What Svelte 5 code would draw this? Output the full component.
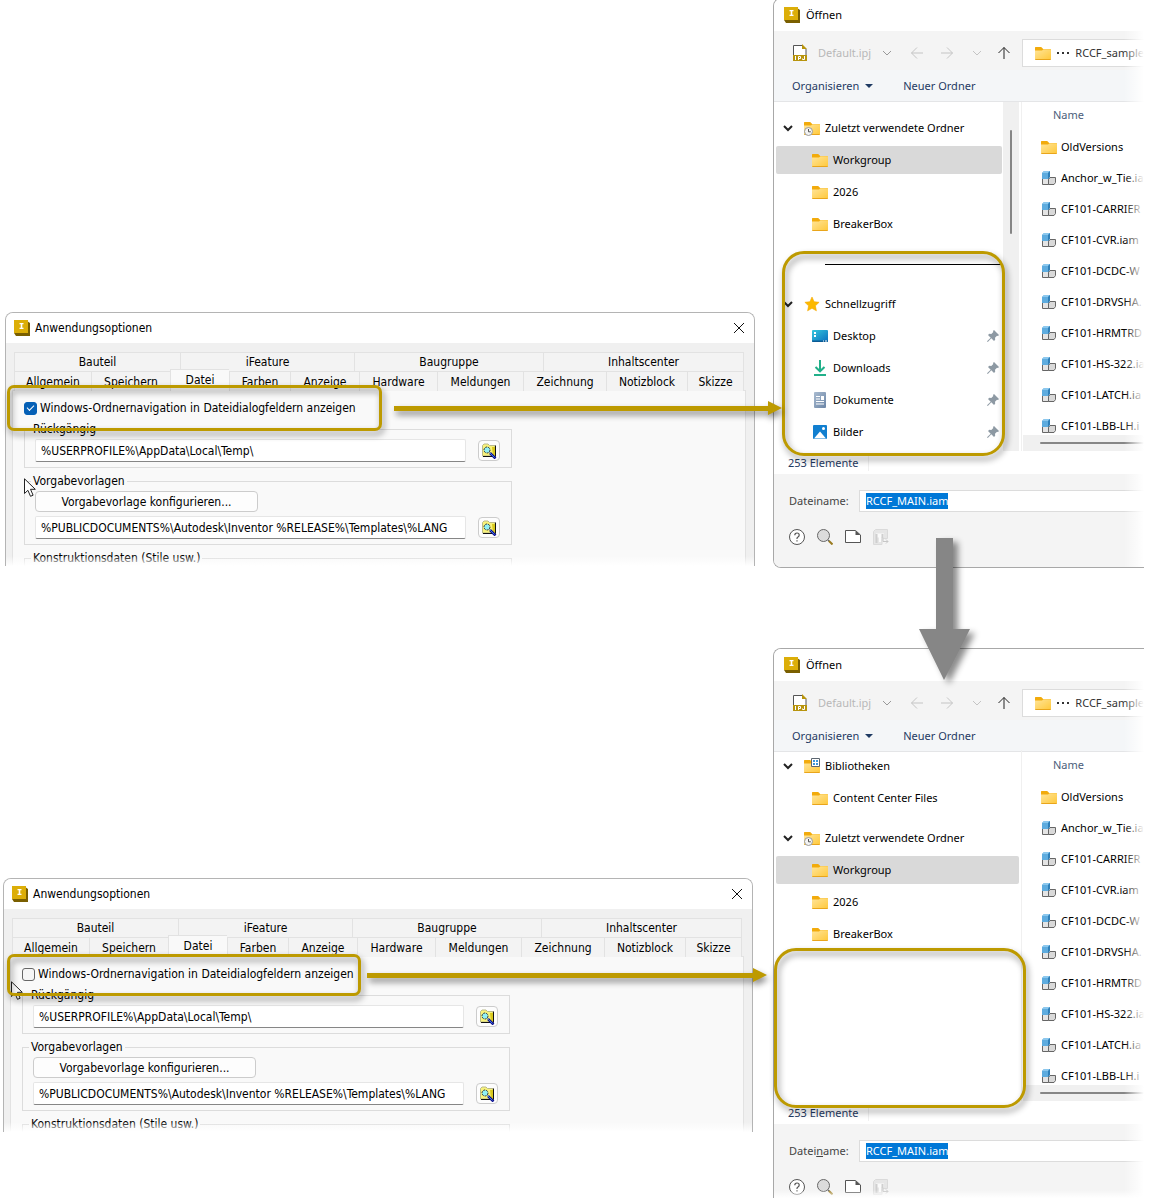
<script>
	const tabRows = [
		['Bauteil', 'iFeature', 'Baugruppe', 'Inhaltscenter'],
		['Allgemein', 'Speichern', 'Datei', 'Farben', 'Anzeige', 'Hardware', 'Meldungen', 'Zeichnung', 'Notizblock', 'Skizze'],
	];

	const files = [
		'OldVersions',
		'Anchor_w_Tie.ia',
		'CF101-CARRIER',
		'CF101-CVR.iam',
		'CF101-DCDC-W',
		'CF101-DRVSHA.',
		'CF101-HRMTRD',
		'CF101-HS-322.ia',
		'CF101-LATCH.ia',
		'CF101-LBB-LH.i',
	];

	const recent = [
		{ label: 'Zuletzt verwendete Ordner', icon: 'recent', head: true },
		{ label: 'Workgroup', icon: 'folder', selected: true },
		{ label: '2026', icon: 'folder' },
		{ label: 'BreakerBox', icon: 'folder' },
	];

	const steps = [
		{
			id: 'on',
			checked: true,
			tree: [
				...recent,
				{ separator: true },
				{ label: 'Schnellzugriff', icon: 'star', head: true },
				{ label: 'Desktop', icon: 'desktop', pinned: true },
				{ label: 'Downloads', icon: 'download', pinned: true },
				{ label: 'Dokumente', icon: 'document', pinned: true },
				{ label: 'Bilder', icon: 'picture', pinned: true },
			],
		},
		{
			id: 'off',
			checked: false,
			tree: [
				{ label: 'Bibliotheken', icon: 'library', head: true },
				{ label: 'Content Center Files', icon: 'folder' },
				{ gap: true },
				...recent,
			],
		},
	];
</script>

{#snippet appIcon()}
	<svg class="icon" width="16" height="16" viewBox="0 0 16 16" aria-hidden="true">
		<path d="M13 1l3 2v13H2l-2-3z" fill="#7a5f00" />
		<path d="M0 0h14v13H0z" fill="#dcae08" />
		<path d="M5.500 3h4v1.200H8.300v3.600h1.200V9h-4V7.800h1.200V4.200H5.500z" fill="#fff" />
	</svg>
{/snippet}

{#snippet folderShape()}
	<path d="M0 2.500Q0 2 .6 2h5.600l2 2h7.200q.6 0 .6.600V8H0z" fill="#f2ab0c" />
	<path d="M0 5.500h7l1.500-1.200H16V14q0 .8-.8.8H.8Q0 14.800 0 14z" fill="url(#folder-fill)" />
	<path d="M.3 14.500h15.400" stroke="#e9a51b" />
{/snippet}

{#snippet icon(name)}
	<svg class="icon" width="16" height="16" viewBox="0 0 16 16" aria-hidden="true">
		{#if name === 'folder'}
			{@render folderShape()}
		{:else if name === 'recent'}
			{@render folderShape()}
			<circle cx="4.500" cy="11.500" r="4" fill="#f4f4f4" stroke="#9a9a9a" />
			<path d="M4.500 9v2.800h2.300" fill="none" stroke="#555" />
		{:else if name === 'library'}
			{@render folderShape()}
			<path d="M7.500.5h8v8h-8z" fill="#fff" stroke="#5c6670" />
			<path d="M9 2h2v2H9zM12 2h2v2h-2zM9 5h2v2H9zM12 5h2v2h-2z" fill="#3c96dc" />
		{:else if name === 'star'}
			<path d="M8 1l2.100 4.700 5 .6-3.700 3.500 1 5L8 12.300l-4.400 2.500 1-5L.9 6.300l5-.6z" fill="#fcb900" stroke="#f5a800" stroke-width=".6" stroke-linejoin="round" />
		{:else if name === 'desktop'}
			<rect y="2" width="16" height="12" rx="1" fill="url(#desktop-fill)" />
			<path d="M2 4h2v2H2zM2 7h2v2H2z" fill="#fff" />
			<path d="M0 12.500h16V13q0 1-1 1H1q-1 0-1-1z" fill="#0b5a94" />
			<path d="M11 13h1M13 13h2" stroke="#fff" />
		{:else if name === 'download'}
			<path d="M8 0v11M3.500 7L8 11.300 12.500 7" fill="none" stroke="#22b08a" stroke-width="2" />
			<path d="M2 15h12" stroke="#22b08a" stroke-width="2" />
		{:else if name === 'document'}
			<rect x="2" y="0" width="12" height="16" rx="1" fill="url(#doc-fill)" />
			<path d="M4 4.500h4M4 7h4M4 9.500h8M4 12h8" stroke="#fff" />
			<path d="M9 4h3v4H9z" fill="#fff" />
		{:else if name === 'picture'}
			<rect x="1" y="1" width="14" height="14" rx="1" fill="#117fd0" />
			<path d="M2 14.500L8 7.500l6 7z" fill="#fff" />
			<circle cx="11.500" cy="4.500" r="1.500" fill="#fff" />
		{:else if name === 'assembly'}
			<path d="M1.500 8.500h6v6h-6z" fill="#e4e4e4" stroke="#666" />
			<path d="M7.500 9.500l1.500-2h5.500v5l-1.500 2H7.500z" fill="#d9d9d9" stroke="#666" />
			<path d="M1 3l2-2h6v5L7 9H1z" fill="#5eacdf" />
			<path d="M1 3l2-2h6L7 3z" fill="#8cc8ee" />
			<path d="M7 3l2-2v6L7 9z" fill="#2f7fb8" />
		{/if}
	</svg>
{/snippet}

{#snippet chevron()}
	<svg class="chevron" width="12" height="12" viewBox="0 0 12 12" aria-hidden="true">
		<path d="M2 4l4 4 4-4" />
	</svg>
{/snippet}

{#snippet browseButton()}
	<button class="browse" type="button" aria-label="Durchsuchen">
		<svg width="16" height="16" viewBox="0 0 16 16" aria-hidden="true">
			<path d="M1.500 13V2.500L3 1h4l1.500 1.500H14V13z" fill="#f8f27a" stroke="#b9b98a" />
			<path d="M14.500 2.500v11H2" fill="none" stroke="#111" />
			<path d="M11 4h3v9h-2z" fill="#d8c81e" />
			<circle cx="6" cy="7" r="3" fill="#8ff0f4" stroke="#333" stroke-dasharray="2 1" />
			<path d="M9 10l5.500 5.500" stroke="#10108c" stroke-width="2.500" />
			<path d="M8.500 9.500l5 5" stroke="#3b78e8" />
		</svg>
	</button>
{/snippet}

<svg class="defs" width="0" height="0" aria-hidden="true">
	<defs>
		<linearGradient id="folder-fill" x1="0" y1="0" x2="1" y2="1">
			<stop offset="0" stop-color="#ffe59a" />
			<stop offset="1" stop-color="#ffc83a" />
		</linearGradient>
		<linearGradient id="desktop-fill" x1="0" y1="0" x2="1" y2="1">
			<stop offset="0" stop-color="#35c8dc" />
			<stop offset="1" stop-color="#0a6fc0" />
		</linearGradient>
		<linearGradient id="doc-fill" x1="0" y1="0" x2="1" y2="1">
			<stop offset="0" stop-color="#a9bbd0" />
			<stop offset="1" stop-color="#6b85a6" />
		</linearGradient>
	</defs>
</svg>

<main>
	{#each steps as step}
		<section class="step {step.id}">
			<div class="options">
				<header class="options-title">
					{@render appIcon()}
					<span>Anwendungsoptionen</span>
					<button class="close" type="button" aria-label="Schließen">
						<svg width="12" height="12" viewBox="0 0 12 12" aria-hidden="true"><path d="M1 1l10 10M11 1L1 11" /></svg>
					</button>
				</header>
				<div class="options-body">
					<div role="tablist">
						{#each tabRows as row, i}
							<div class="tabs row-{i}" role="presentation">
								{#each row as tab}
									<button type="button" role="tab" class="tab" class:active={tab === 'Datei'} aria-selected={tab === 'Datei'}>{tab}</button>
								{/each}
							</div>
						{/each}
					</div>
					<div class="panel">
						<label class="check">
							<input type="checkbox" checked={step.checked} />
							Windows-Ordnernavigation in Dateidialogfeldern anzeigen
						</label>
						<fieldset>
							<legend>Rückgängig</legend>
							<div class="path">
								<input type="text" aria-label="Rückgängig" value="%USERPROFILE%\AppData\Local\Temp\" />
								{@render browseButton()}
							</div>
						</fieldset>
						<fieldset>
							<legend>Vorgabevorlagen</legend>
							<button class="configure" type="button">Vorgabevorlage konfigurieren...</button>
							<div class="path">
								<input type="text" aria-label="Vorgabevorlagen" value="%PUBLICDOCUMENTS%\Autodesk\Inventor %RELEASE%\Templates\%LANG" />
								{@render browseButton()}
							</div>
						</fieldset>
						<fieldset>
							<legend>Konstruktionsdaten (Stile usw.)</legend>
							<div class="path"></div>
						</fieldset>
					</div>
				</div>
			</div>

			<div class="dialog">
				<header class="dialog-title">
					{@render appIcon()}
					<span>Öffnen</span>
				</header>
				<div class="toolbar">
					<svg width="16" height="18" viewBox="0 0 16 18" aria-hidden="true">
						<path d="M1.500 11V1.500h9l3.500 3.500v6" fill="#fff" stroke="#555" />
						<path d="M10 0l5 5h-5z" fill="#b8940c" />
						<path d="M1 11h14v6H1z" fill="#b8940c" />
						<path d="M3.500 12v4M6.500 16v-3.500h2v2h-2M12.500 12v3.500h-2v-1" fill="none" stroke="#fff" />
					</svg>
					<span class="project">Default.ipj</span>
					<button type="button" class="nav mid" aria-label="Projekt wählen">{@render chevron()}</button>
					<button type="button" class="nav" aria-label="Zurück"><svg width="14" height="14" viewBox="0 0 14 14"><path d="M13 7H1.500M7 1.500L1.500 7 7 12.500" /></svg></button>
					<button type="button" class="nav" aria-label="Vorwärts"><svg width="14" height="14" viewBox="0 0 14 14"><path d="M1 7h11.500M7 1.500L12.500 7 7 12.500" /></svg></button>
					<button type="button" class="nav" aria-label="Verlauf">{@render chevron()}</button>
					<button type="button" class="nav up" aria-label="Nach oben"><svg width="14" height="14" viewBox="0 0 14 14"><path d="M7 13V1.500M1.500 7L7 1.500 12.500 7" /></svg></button>
					<div class="address">
						{@render icon('folder')}
						<svg width="12" height="4" viewBox="0 0 12 4" aria-hidden="true"><path d="M0 1h2v2H0zM5 1h2v2H5zM10 1h2v2h-2z" fill="#333" /></svg>
						<span>RCCF_sample</span>
					</div>
				</div>
				<div class="commands">
					<button type="button">Organisieren <svg width="8" height="4" viewBox="0 0 8 4" aria-hidden="true"><path d="M0 0h8L4 4z" fill="#1f3a63" /></svg></button>
					<button type="button">Neuer Ordner</button>
				</div>
				<div class="browser">
					<ul class="tree">
						{#each step.tree as node}
							{#if node.separator}
								<li class="separator"></li>
							{:else if node.gap}
								<li class="gap"></li>
							{:else}
								<li class="node" class:head={node.head} class:selected={node.selected}>
									{#if node.head}{@render chevron()}{/if}
									{@render icon(node.icon)}
									<span>{node.label}</span>
									{#if node.pinned}
										<svg class="pin" width="12" height="12" viewBox="0 0 12 12" aria-hidden="true">
											<path d="M7 0l5 5-1 1-1-.3-2 2 .2 2L7 11 4.300 8.200.8 12l-.8-.8 3.700-3.500L1 5l1.300-1.200 2 .2 2-2L6 1z" fill="#8d99a3" />
										</svg>
									{/if}
								</li>
							{/if}
						{/each}
					</ul>
					{#if step.checked}
						<div class="vscroll"><i></i></div>
					{/if}
					<div class="list">
						<div class="column">Name</div>
						<ul class="files">
							{#each files as file, i}
								<li>{@render icon(i === 0 ? 'folder' : 'assembly')}<span>{file}</span></li>
							{/each}
						</ul>
						<div class="hscroll"><i></i></div>
					</div>
				</div>
				<div class="status"><span>253 Elemente</span></div>
				<footer>
					<div class="filename">
						<label for="filename-{step.id}">{#if step.checked}Dateiname:{:else}Datei<u>n</u>ame:{/if}</label>
						<div class="field"><input id="filename-{step.id}" type="text" value="RCCF_MAIN.iam" /></div>
					</div>
					<div class="tools">
						<button type="button" aria-label="Hilfe">
							<svg width="16" height="16" viewBox="0 0 16 16"><circle cx="8" cy="8" r="7.500" fill="#fff" stroke="#555" /><path d="M5.800 6.200q0-2.200 2.200-2.200t2.200 2q0 1.200-1.200 1.900T8 9.500v.5M8 11.200v1.300" fill="none" stroke="#555" stroke-width="1.200" /></svg>
						</button>
						<button type="button" aria-label="Suchen">
							<svg width="16" height="16" viewBox="0 0 16 16"><circle cx="6.500" cy="6.500" r="6" fill="#dcdcdc" stroke="#666" /><path d="M11 11l1.500 1.500" stroke="#666" stroke-width="1.500" /><path d="M12 12l3.500 3.500" stroke="#9a7b20" stroke-width="2" /></svg>
						</button>
						<button type="button" aria-label="Neue Datei">
							<svg width="16" height="16" viewBox="0 0 16 16"><path d="M.5 1.500h10L15.500 6v7.500H.5z" fill="#fff" stroke="#555" /><path d="M10.500 1.500V6h5z" fill="#555" /></svg>
						</button>
						<button type="button" aria-label="Platzieren" disabled>
							<svg width="16" height="16" viewBox="0 0 16 16"><path d="M.5 2.500l2-2h12v9H9v6H.5z" fill="#e6e6e6" stroke="#dadada" /><path d="M3 4.500h8v4H8V13H6V8.500H3z" fill="#fafafa" /><path d="M3.500 5v9M9.500 5v4" stroke="#cfcfcf" stroke-width="2" /><path d="M10 9.500v3h5M13 10.500l2 2-2 2" fill="none" stroke="#c6c6c6" /></svg>
						</button>
					</div>
				</footer>
			</div>

			<svg class="cursor" width="13" height="20" viewBox="0 0 13 20" aria-hidden="true">
				<path d="M.5.8v14.700l3.400-3.200 2.600 6 2.600-1.100-2.600-5.900h4.800z" fill="#fff" stroke="#222" />
			</svg>
			<div class="callout option"></div>
			<div class="callout folders"></div>
			<div class="arrow"></div>
		</section>
	{/each}

	<svg class="down" width="60" height="150" viewBox="0 0 60 150" aria-hidden="true">
		<path d="M18 0h17v91h17L26 142 1 91h17z" fill="#868686" />
	</svg>
</main>

<style>
	:global(body) {
		margin: 0;
		background: #fff;
	}

	main {
		position: relative;
		overflow: hidden;
		font: 11px/16px 'Noto Sans', 'Open Sans', sans-serif;
		color: #000;
	}

	.defs {
		position: absolute;
	}

	button {
		padding: 0;
		border: 0;
		background: none;
		font: inherit;
		color: inherit;
	}

	ul {
		margin: 0;
		padding: 0;
		list-style: none;
	}

	svg {
		display: block;
		flex: none;
	}

	.step {
		position: relative;
		display: grid;
		grid-template-columns: 773px minmax(0, 1fr);
		align-items: start;
		padding-right: 6px;
	}

	.step.on {
		padding-bottom: 82px;
	}

	/* options window */
	.options {
		position: relative;
		box-sizing: border-box;
		height: 254px;
		margin: 312px 18px 0 5px;
		border: 1px solid #b4b4b4;
		border-bottom: 0;
		border-radius: 8px 8px 0 0;
		overflow: hidden;
		background: #f0f0f0;
		font-family: 'DejaVu Sans Condensed', 'DejaVu Sans', sans-serif;
		font-size: 12px;
	}

	.off .options {
		margin: 228px 20px 0 3px;
	}

	.options::after {
		content: '';
		position: absolute;
		inset: auto 0 0;
		height: 10px;
		background: linear-gradient(transparent, #fff);
	}

	.options-title {
		display: flex;
		align-items: center;
		gap: 5px;
		height: 30px;
		padding: 0 9px 0 8px;
		background: #fff;
	}

	.close {
		margin-left: auto;
	}

	.close path {
		stroke: #111;
	}

	.options-body {
		padding: 9px 8px 0 6px;
	}

	[role='tablist'] {
		padding: 0 2px;
	}

	.tabs {
		display: grid;
		height: 19px;
		border-right: 1px solid #e2e2e2;
	}

	.row-0 {
		grid-template-columns: 166fr 174fr 189fr 200fr;
	}

	.row-1 {
		grid-template-columns: 77fr 79fr 59fr 61fr 69fr 78fr 86fr 83fr 81fr 56fr;
	}

	.tab {
		min-width: 0;
		border-top: 1px solid #e2e2e2;
		border-left: 1px solid #e2e2e2;
		background: #f3f3f3;
		white-space: nowrap;
	}

	.tab.active {
		height: 22px;
		margin-top: -2px;
		padding-bottom: 2px;
		background: #f9f9f9;
	}

	.panel {
		display: flex;
		flex-direction: column;
		gap: 5px;
		padding: 9px 11px;
		border: 1px solid #e2e2e2;
		background: #f9f9f9;
	}

	.check {
		display: flex;
		align-items: center;
		gap: 3px;
	}

	.check input {
		appearance: none;
		box-sizing: border-box;
		width: 13px;
		height: 13px;
		margin: 0;
		border: 1px solid #666;
		border-radius: 3px;
		background: #f6f6f6;
	}

	.check input:checked {
		border-color: #0560b6;
		background: #0560b6;
	}

	.check input:checked::after {
		content: '';
		display: block;
		width: 6px;
		height: 3px;
		margin: 2px;
		border: solid #fff;
		border-width: 0 0 1px 1px;
		transform: rotate(-45deg);
	}

	fieldset {
		box-sizing: border-box;
		width: 488px;
		margin: 0;
		padding: 2px 10px 5px;
		border: 1px solid #dcdcdc;
	}

	legend {
		margin-left: -4px;
		padding: 0 2px;
	}

	.path {
		display: flex;
		align-items: center;
		gap: 12px;
		min-height: 23px;
	}

	.path input {
		box-sizing: border-box;
		width: 431px;
		height: 23px;
		padding: 0 5px;
		border: 1px solid #e6e6e6;
		border-bottom-color: #868686;
		border-radius: 2px;
		background: #fff;
		font: inherit;
		color: inherit;
	}

	.browse,
	.configure {
		display: grid;
		place-items: center;
		box-sizing: border-box;
		width: 22px;
		height: 21px;
		border: 1px solid #ccc;
		border-radius: 4px;
		background: #fdfdfd;
	}

	.configure {
		width: 223px;
		margin-bottom: 4px;
	}

	/* file dialog */
	.dialog {
		position: relative;
		margin-top: -2px;
		border: solid #a8a8a8;
		border-width: 1px 0 1px 1px;
		border-radius: 8px 0 0 8px;
		overflow: hidden;
		white-space: nowrap;
	}

	.off .dialog {
		height: 549px;
		border-bottom: 0;
		border-bottom-left-radius: 0;
	}

	.dialog::after {
		content: '';
		position: absolute;
		inset: 0 0 0 auto;
		width: 20px;
		background: linear-gradient(to right, transparent, #fff);
	}

	.off .dialog::before {
		content: '';
		position: absolute;
		inset: auto 0 0;
		height: 8px;
		background: linear-gradient(transparent, #fff);
	}

	.dialog-title {
		display: flex;
		align-items: center;
		gap: 6px;
		height: 32px;
		padding-left: 10px;
		background: #fff;
	}

	.toolbar {
		display: flex;
		align-items: center;
		height: 34px;
		padding: 5px 0 0 18px;
		background: #f4f4f4;
		color: #b8b8b8;
	}

	.project {
		width: 55px;
		margin-left: 10px;
	}

	.nav {
		display: grid;
		place-items: center;
		width: 30px;
	}

	.nav path,
	.chevron path {
		fill: none;
		stroke: #c4c4c4;
	}

	.nav.mid path {
		stroke: #999;
	}

	.nav.up {
		width: 26px;
	}

	.nav.up path {
		stroke: #222;
	}

	.address {
		display: flex;
		align-items: center;
		flex: 1;
		gap: 6px;
		box-sizing: border-box;
		height: 28px;
		margin-left: 5px;
		padding-left: 12px;
		border: 1px solid #dcdcdc;
		border-right: 0;
		background: #fff;
		color: #333;
	}

	.commands {
		display: flex;
		align-items: center;
		gap: 30px;
		height: 31px;
		padding-left: 18px;
		border-bottom: 1px solid #e4e5e7;
		background: #f4f6f8;
		color: #1f3a63;
	}

	.commands button {
		display: flex;
		align-items: center;
		gap: 6px;
	}

	.browser {
		display: flex;
		height: 349px;
	}

	.tree {
		display: flex;
		flex-direction: column;
		flex: none;
		box-sizing: border-box;
		width: 229px;
		padding: 10px 1px 0 2px;
		overflow: hidden;
	}

	.off .tree {
		width: 248px;
		margin-top: -2px;
		padding: 0 2px;
		border-right: 1px solid #f0f0f0;
	}

	.node {
		display: flex;
		align-items: center;
		gap: 5px;
		box-sizing: border-box;
		height: 28px;
		margin: 2px 0;
		padding: 0 3px 0 36px;
		border-radius: 2px;
	}

	.node.head {
		padding-left: 6px;
	}

	.node.selected {
		background: #d9d9d9;
	}

	.node .chevron {
		margin-right: 5px;
	}

	.node .chevron path {
		stroke: #222;
		stroke-width: 2;
	}

	.pin {
		margin-left: auto;
	}

	.separator {
		height: 24px;
		margin: 0 0 23px 49px;
		border-bottom: 1px solid #000;
	}

	.gap {
		height: 8px;
	}

	.vscroll {
		display: flex;
		justify-content: center;
		width: 16px;
		padding-top: 28px;
		background: #f0f0f0;
	}

	.vscroll i {
		width: 2px;
		height: 104px;
		border-radius: 1px;
		background: #868686;
	}

	.list {
		display: flex;
		flex-direction: column;
		flex: 1;
		min-width: 0;
		padding-left: 1px;
	}

	.on .list {
		margin-left: 2px;
		border-left: 1px solid #f0f0f0;
	}

	.column {
		padding: 5px 0 8px 30px;
		color: #4c607a;
	}

	.files {
		flex: 1;
		min-height: 0;
		overflow: hidden;
	}

	.files li {
		display: flex;
		align-items: center;
		gap: 4px;
		height: 31px;
		padding-left: 18px;
	}

	.hscroll {
		display: flex;
		align-items: center;
		flex: none;
		height: 16px;
		padding-left: 17px;
		background: #f0f0f0;
	}

	.hscroll i {
		flex: 1;
		height: 2px;
		border-radius: 1px;
		background: #868686;
	}

	.status {
		display: flex;
		align-items: center;
		height: 23px;
		padding-left: 14px;
		color: #1f3a63;
	}

	.status span {
		padding-right: 10px;
		border-right: 1px solid #f0f0f0;
	}

	footer {
		box-sizing: border-box;
		height: 93px;
		padding: 16px 0 0 15px;
		background: #f4f4f4;
		color: #444;
	}

	.filename {
		display: flex;
		align-items: center;
	}

	.filename label {
		width: 70px;
	}

	.field {
		display: flex;
		flex: 1;
		padding: 2px 6px;
		border: 1px solid #dcdcdc;
		border-right: 0;
		background: #fff;
	}

	.field input {
		field-sizing: content;
		height: 16px;
		padding: 0;
		border: 0;
		background: #0078d7;
		font: inherit;
		color: #fff;
	}

	.tools {
		display: flex;
		gap: 12px;
		margin-top: 17px;
	}

	/* annotations over the windows */
	.callout,
	.arrow,
	.cursor,
	.down {
		position: absolute;
		pointer-events: none;
	}

	.callout {
		box-sizing: border-box;
		border: 3px solid #bd9a00;
		border-radius: 7px;
		filter: drop-shadow(2px 4px 3px rgb(0 0 0 / 45%));
	}

	.callout.folders {
		border-radius: 22px;
	}

	.on .option {
		left: 7px;
		top: 385px;
		width: 375px;
		height: 46px;
	}

	.off .option {
		left: 7px;
		top: 304px;
		width: 354px;
		height: 42px;
	}

	.on .folders {
		left: 782px;
		top: 251px;
		width: 223px;
		height: 205px;
	}

	.off .folders {
		left: 774px;
		top: 298px;
		width: 252px;
		height: 160px;
	}

	.arrow {
		left: 394px;
		top: 406px;
		width: 374px;
		height: 5px;
		background: #bd9a00;
		filter: drop-shadow(2px 4px 3px rgb(0 0 0 / 45%));
	}

	.off .arrow {
		left: 367px;
		top: 323px;
		width: 386px;
	}

	.arrow::after {
		content: '';
		position: absolute;
		left: 100%;
		top: -5px;
		border: solid transparent;
		border-width: 7px 0 7px 14px;
		border-left-color: #bd9a00;
	}

	.cursor {
		left: 24px;
		top: 478px;
	}

	.off .cursor {
		left: 11px;
		top: 331px;
	}

	.down {
		left: 918px;
		top: 538px;
		overflow: visible;
		filter: drop-shadow(5px 4px 3px rgb(0 0 0 / 45%));
	}
</style>
